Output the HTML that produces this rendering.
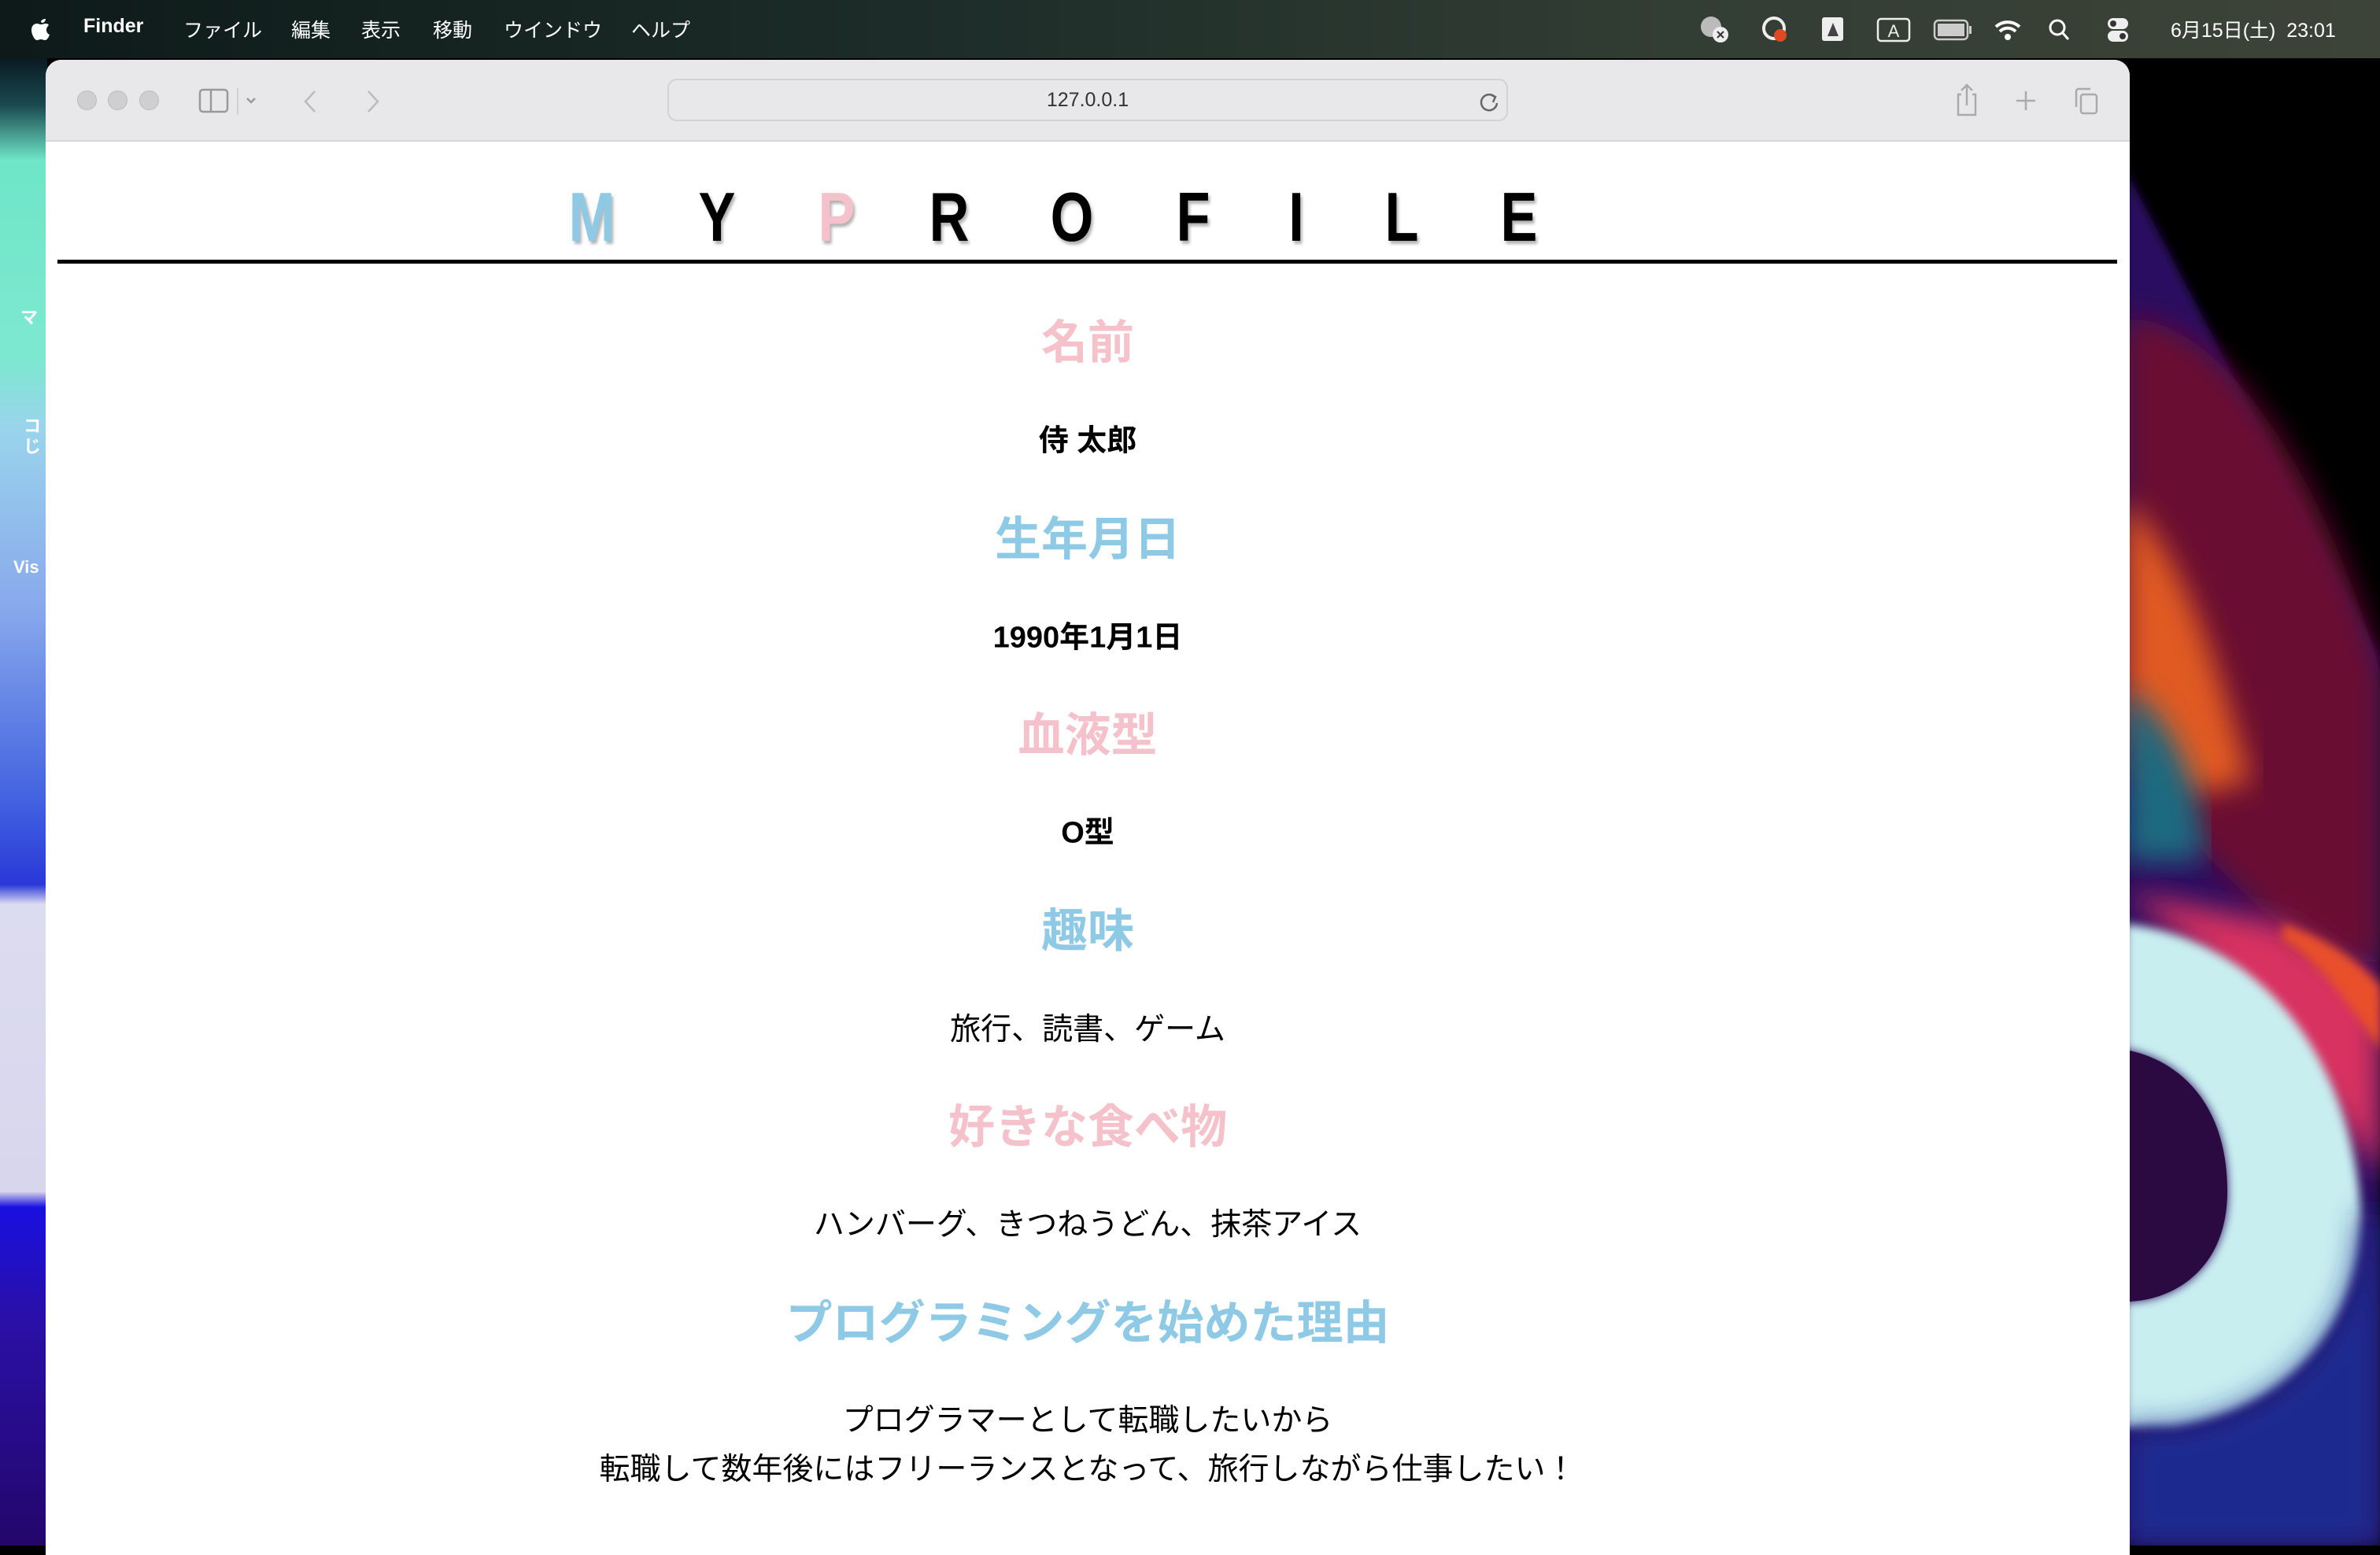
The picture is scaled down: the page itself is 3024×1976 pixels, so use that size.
<!DOCTYPE html>
<html><head><meta charset="utf-8">
<style>
*{margin:0;padding:0;box-sizing:border-box}
html,body{width:3024px;height:1964px;overflow:hidden;background:#000;font-family:"Liberation Sans","Noto Sans CJK JP",sans-serif}
#menubar{position:absolute;left:0;top:0;width:3024px;height:74px;background:linear-gradient(90deg,#0d1a19 0%,#1d2d29 40%,#323d33 70%,#3d4339 100%);color:#fff;font-size:25px}
#menubar span{position:absolute;top:19px;white-space:nowrap}
#left{position:absolute;left:0;top:74px;width:60px;height:1890px;background:linear-gradient(180deg,#0a1a22 0px,#1a4a50 60px,#6fe6c8 130px,#7de8d0 380px,#9ad4ec 470px,#88a8ec 700px,#4060e0 950px,#2a38d8 1050px,#dcdcf0 1075px,#d8d6ec 1440px,#1810e0 1460px,#2a10a8 1600px,#24066a 1890px)}
#left i{position:absolute;color:#fff;font-style:normal;font-size:22px;font-weight:bold}
#right{position:absolute;left:2700px;top:74px;width:324px;height:1890px;background:#000;overflow:hidden}
#win{position:absolute;left:58px;top:76px;width:2648px;height:1900px;background:#fff;border-radius:20px 20px 0 0;overflow:hidden}
#tb{position:absolute;left:0;top:0;width:100%;height:104px;background:#e8e8ea;border-bottom:2px solid #d6d6d8}
.dot{position:absolute;top:39px;width:25px;height:25px;border-radius:50%;background:#cfcfd1;border:1px solid #bdbdbf}
#addr{position:absolute;left:790px;top:24px;width:1068px;height:54px;border:2px solid #d2d2d4;border-radius:12px;background:#e8e8ea;text-align:center;line-height:50px;font-size:25px;color:#333}
.t{position:absolute;top:156px;font-size:88px;font-weight:bold;transform:translateX(-50%) scaleX(0.8);text-shadow:3px 4px 4px rgba(0,0,0,.3);line-height:1}
#rule{position:absolute;left:15px;top:254px;width:2617px;height:5px;background:#000}
.c{position:absolute;left:0;width:100%;text-align:center;white-space:nowrap;transform:translateY(-50%)}
.h{font-size:59px;font-weight:bold}
.pk{color:#f5c2cc}.bl{color:#8ecae6}
.b{font-size:38px;font-weight:bold;color:#000}
.n{font-size:39px;color:#000}
</style></head><body>
<div id="menubar">
<svg style="position:absolute;left:38px;top:18px" width="28" height="34" viewBox="0 0 28 34"><path d="M14 9c2-3 5-3 6-3-0 3-2 5-5 5 0 0-1-1-1-2z M20 12c-2 0-4 1-6 1s-3-1-5-1c-4 0-7 3-7 8 0 6 4 13 7 13 2 0 3-1 5-1s3 1 5 1c3 0 5-4 6-7-3-1-4-4-4-6 0-3 2-5 3-6-1-2-3-2-4-2z" fill="#fff"/></svg>
<span style="left:106px;font-weight:bold">Finder</span>
<span style="left:233px">ファイル</span>
<span style="left:370px">編集</span>
<span style="left:459px">表示</span>
<span style="left:550px">移動</span>
<span style="left:640px">ウインドウ</span>
<span style="left:802px">ヘルプ</span>
<svg style="position:absolute;left:2150px;top:18px" width="860" height="40" viewBox="0 0 860 40">
<circle cx="24" cy="16" r="13" fill="#bbb"/><circle cx="36" cy="26" r="10" fill="#eee"/><path d="M32 22l8 8M40 22l-8 8" stroke="#333" stroke-width="2"/>
<circle cx="104" cy="18" r="13" fill="none" stroke="#eee" stroke-width="4"/><circle cx="112" cy="27" r="8" fill="#e04a22"/>
<rect x="165" y="4" width="27" height="30" rx="3" fill="#eee"/><path d="M172 28l7-17 7 17z" fill="#444"/>
<rect x="236" y="6" width="40" height="28" rx="4" fill="none" stroke="#eee" stroke-width="2.5"/><text x="256" y="29" font-size="22" fill="#eee" text-anchor="middle" font-family="Liberation Sans">A</text>
<rect x="308" y="8" width="42" height="24" rx="5" fill="none" stroke="#ccc" stroke-width="2.5"/><rect x="312" y="12" width="34" height="16" fill="#ccc"/><rect x="352" y="15" width="3" height="10" fill="#ccc"/>
<path d="M386 16a22 22 0 0 1 30 0M391 22a14 14 0 0 1 20 0" stroke="#fff" stroke-width="4" fill="none"/><circle cx="401" cy="29" r="4" fill="#fff"/>
<circle cx="464" cy="17" r="9" fill="none" stroke="#fff" stroke-width="3"/><path d="M471 24l7 8" stroke="#fff" stroke-width="3"/>
<rect x="528" y="5" width="26" height="14" rx="7" fill="#eee"/><rect x="528" y="21" width="26" height="14" rx="7" fill="#eee"/><circle cx="535" cy="12" r="4" fill="#333"/><circle cx="547" cy="28" r="4" fill="#333"/>
</svg>
<span style="left:2758px">6月15日(土)&nbsp; 23:01</span>
</div>
<div id="left">
<i style="left:26px;top:312px">マ</i>
<i style="left:30px;top:450px">コ</i><i style="left:30px;top:476px">じ</i>
<i style="left:17px;top:634px">Vis</i>
</div>
<div id="right">
<svg width="324" height="1890" viewBox="0 0 324 1890">
<defs><filter id="bl"><feGaussianBlur stdDeviation="18"/></filter><filter id="bl2"><feGaussianBlur stdDeviation="6"/></filter></defs>
<path d="M0 140 L324 760 L324 1890 L0 1890Z" fill="#2a1060" filter="url(#bl2)"/>
<path d="M0 330 C120 330 250 520 324 780 L324 1150 C200 1150 100 1000 0 900Z" fill="#6a1030" filter="url(#bl)"/>
<path d="M0 560 C80 640 120 780 160 920 L60 940 L0 820Z" fill="#e05a20" filter="url(#bl)"/>
<path d="M0 800 C60 840 100 930 100 1020 L0 1020Z" fill="#1a6a80" filter="url(#bl)"/>
<path d="M0 1060 L200 1100 L324 1180 L324 1420 L250 1320 L100 1140 Z" fill="#d83060" filter="url(#bl)"/>
<path d="M200 1100 C260 1120 300 1150 324 1180 L324 1260 C290 1210 250 1150 200 1120Z" fill="#e8502a" filter="url(#bl2)"/>
<path d="M0 1100 C180 1120 290 1280 300 1470 C300 1620 200 1720 60 1740 L0 1740 L0 1580 C60 1580 130 1540 130 1440 C130 1320 60 1270 0 1260Z" fill="#c8eef0" filter="url(#bl2)"/>
<path d="M60 1740 C200 1720 300 1620 300 1470 L324 1470 L324 1890 L0 1890 L0 1740Z" fill="#1a2a90" filter="url(#bl)"/>
<path d="M0 1580 C60 1580 130 1540 130 1440 C130 1320 60 1270 0 1260Z" fill="#2a0a40"/>
</svg>
</div>
<div id="win">
<div id="tb">
<div class="dot" style="left:40px"></div><div class="dot" style="left:79px"></div><div class="dot" style="left:119px"></div>
<svg style="position:absolute;left:194px;top:34px" width="130" height="40" viewBox="0 0 130 40">
<rect x="2" y="4" width="35" height="28" rx="4" fill="none" stroke="#999" stroke-width="2.5"/><line x1="16" y1="4" x2="16" y2="32" stroke="#999" stroke-width="2.5"/>
<line x1="50" y1="2" x2="50" y2="36" stroke="#d0d0d0" stroke-width="2"/>
<path d="M62 15l5 5 5-5" stroke="#999" stroke-width="2.5" fill="none"/>
</svg>
<svg style="position:absolute;left:320px;top:36px" width="140" height="34" viewBox="0 0 140 34">
<path d="M22 4 L10 17 L22 30" stroke="#bbb" stroke-width="2.5" fill="none"/>
<path d="M90 4 L102 17 L90 30" stroke="#bbb" stroke-width="2.5" fill="none"/>
</svg>
<div id="addr">127.0.0.1</div>
<svg style="position:absolute;left:1820px;top:38px" width="28" height="30" viewBox="0 0 28 30"><path d="M21 9a10 10 0 1 0 3 8" stroke="#666" stroke-width="2.5" fill="none"/><path d="M15 6l7 3-3 7" stroke="#666" stroke-width="2.5" fill="none"/></svg>
<svg style="position:absolute;left:2420px;top:28px" width="200" height="50" viewBox="0 0 200 50">
<path d="M14 16 H10 V42 H32 V16 H28" stroke="#aaa" stroke-width="2.5" fill="none"/><path d="M21 4 V30 M14 11 L21 4 L28 11" stroke="#aaa" stroke-width="2.5" fill="none"/>
<path d="M96 12 V36 M84 24 H108" stroke="#aaa" stroke-width="2.5"/>
<rect x="166" y="16" width="20" height="24" rx="3" fill="none" stroke="#aaa" stroke-width="2.5"/><path d="M160 32 V12 a3 3 0 0 1 3-3 H178" stroke="#aaa" stroke-width="2.5" fill="none"/>
</svg>
</div>
<div class="t bl" style="left:694px">M</div>
<div class="t" style="left:853px">Y</div>
<div class="t pk" style="left:1005px">P</div>
<div class="t" style="left:1148px">R</div>
<div class="t" style="left:1304px">O</div>
<div class="t" style="left:1458px">F</div>
<div class="t" style="left:1589px">I</div>
<div class="t" style="left:1723px">L</div>
<div class="t" style="left:1872px">E</div>
<div id="rule"></div>
<div class="c h pk" style="top:354px">名前</div>
<div class="c b" style="top:480px">侍 太郎</div>
<div class="c h bl" style="top:604px">生年月日</div>
<div class="c b" style="top:730px">1990年1月1日</div>
<div class="c h pk" style="top:853px">血液型</div>
<div class="c b" style="top:978px">O型</div>
<div class="c h bl" style="top:1102px">趣味</div>
<div class="c n" style="top:1229px">旅行、読書、ゲーム</div>
<div class="c h pk" style="top:1351px">好きな食べ物</div>
<div class="c n" style="top:1477px">ハンバーグ、きつねうどん、抹茶アイス</div>
<div class="c h bl" style="top:1600px">プログラミングを始めた理由</div>
<div class="c n" style="top:1726px">プログラマーとして転職したいから</div>
<div class="c n" style="top:1788px">転職して数年後にはフリーランスとなって、旅行しながら仕事したい！</div>
</div>
</body></html>
